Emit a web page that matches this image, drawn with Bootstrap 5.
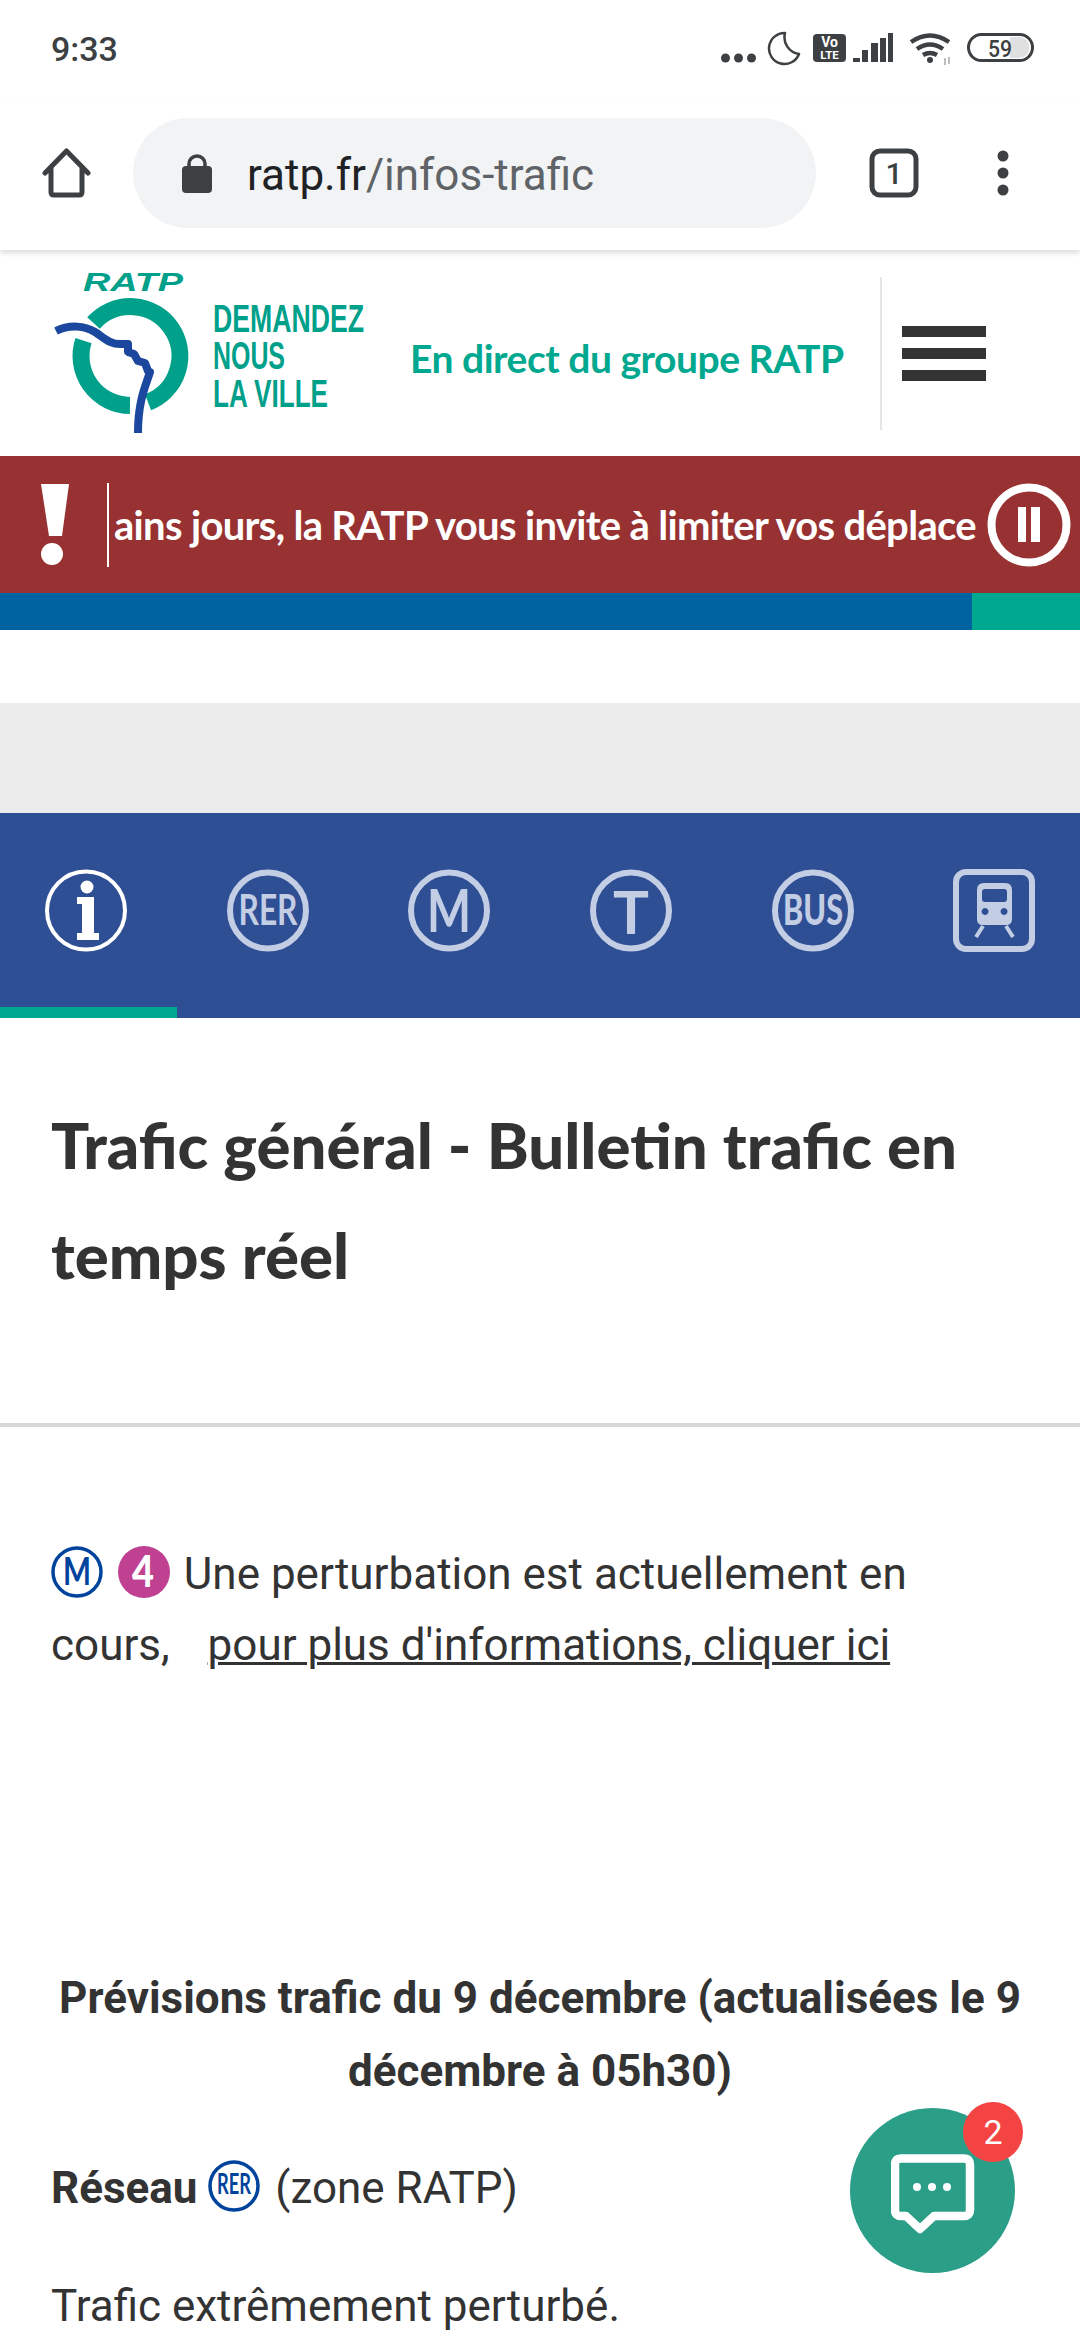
<!DOCTYPE html>
<html lang="fr">
<head>
<meta charset="UTF-8">
<meta name="viewport" content="width=device-width, initial-scale=1.0">
<title>Infos trafic - RATP</title>
<link href="https://cdn.jsdelivr.net/npm/bootstrap@5.3.0/dist/css/bootstrap.min.css" rel="stylesheet">
<style>
body { width: 1080px; height: 2340px; overflow: hidden; font-family: Roboto, sans-serif; color: #333; background: #fff; position: relative; }
.status-bar { height: 100px; padding: 0 44px 4px 51px; color: #3c4043; }
.status-time { font-size: 34px; font-weight: 500; margin-top: 3px; }
.chrome-bar { height: 150px; padding: 18px 0 22px 42px; box-shadow: 0 3px 5px rgba(0,0,0,.14); position: relative; z-index: 1; }
.url-pill { width: 683px; height: 110px; margin-left: 42px; background: #f1f3f4; border-radius: 55px; padding-left: 49px; font-size: 44px; color: #202124; }
.url-lock { margin-right: 35px; }
.url-text { margin-top: 3px; }
.url-path { color: #5f6368; }
.tab-count { margin-left: 53px; }
.more-dots { margin-left: 76px; }
.site-header { height: 206px; padding-left: 53px; }
.head-tagline { width: 433px; font-family: Lato, sans-serif; font-weight: 700; font-size: 39px; letter-spacing: -.48px; color: #00a88f; margin-left: 45px; margin-top: 10px; white-space: nowrap; }
.head-sep { width: 2px; height: 153px; background: #e6e6e6; margin-left: 37px; }
.burger { width: 84px; margin-left: 20px; }
.burger span { display: block; height: 11px; background: #333; margin-top: 11px; }
.burger span:first-child { margin-top: 0; }
.alert-band { height: 137px; background: #983232; color: #fff; }
.alert-mark { width: 109px; height: 84px; border-right: 2px solid #fff; padding-left: 40px; flex: none; }
.alert-text { width: 862px; margin-left: 5px; overflow: hidden; white-space: nowrap; font-family: Lato, sans-serif; font-weight: 700; font-size: 40px; letter-spacing: -.68px; }
.pause-wrap { margin-left: 11px; }
.stripe { height: 37px; background: #0063a1; }
.stripe-end { width: 108px; background: #00a88f; }
.grey-band { height: 110px; background: #ececec; margin-top: 73px; }
.line-tabs { height: 205px; background: #2f4f95; padding: 56px 0 0 45px; gap: 99.7px; position: relative; overflow: hidden; }
.line-tabs svg { flex: none; }
.tab-active { position: absolute; left: 0; bottom: 0; width: 177px; height: 11px; background: #00a88f; }
.page-title { font-family: Lato, sans-serif; font-weight: 900; font-size: 63.5px; line-height: 110px; margin: 0; padding: 72px 51px 113px; color: #333; }
.title-rule { height: 4px; background: #d8d8d8; }
.info-body { padding: 0 51px; font-size: 44px; line-height: 71px; }
.notice { margin: 112px 0 0; }
.notice svg, .rer-line svg { vertical-align: -9px; }
.line-four { margin-right: 3px; }
.notice a { color: #333; margin-left: 27px; text-decoration-thickness: 3px; }
.forecast { margin: 281px 0 0; text-align: center; font-weight: 700; line-height: 73px; }
.rer-line { margin: 45px 0 0; }
.rer-line b { font-weight: 700; }
.traffic-line { margin: 47px 0 0; }
.chat-btn { position: absolute; left: 850px; top: 2108px; width: 165px; height: 165px; border-radius: 50%; background: #2b9e87; }
.chat-btn > svg { margin: 7px 0 0 1px; }
.chat-count { position: absolute; left: 113px; top: -6px; width: 60px; height: 60px; border-radius: 50%; background: #f44343; color: #fff; font-size: 34px; }
</style>
</head>
<body>

<div class="status-bar d-flex align-items-center justify-content-between">
    <span class="status-time">9:33</span>
    <svg width="316" height="36" viewBox="720 30 316 36" fill="#3c4043">
        <circle cx="725.500" cy="58" r="4.500"/><circle cx="738.500" cy="58" r="4.500"/><circle cx="751.500" cy="58" r="4.500"/>
        <path d="M785 33A15.500 15.500 0 1 0 799 54 17 17 0 0 1 785 33z" fill="none" stroke="#3c4043" stroke-width="2.500" stroke-linejoin="round"/>
        <rect x="813" y="34" width="33" height="28" rx="4"/>
        <text x="829.500" y="47" font-family="Roboto" font-size="14" font-weight="700" fill="#fff" text-anchor="middle">Vo</text>
        <text x="829.500" y="59" font-family="Roboto" font-size="11.500" font-weight="700" fill="#fff" text-anchor="middle">LTE</text>
        <rect x="853" y="58" width="7" height="4"/><rect x="862" y="50" width="6" height="12"/><rect x="871" y="43" width="7" height="19"/><rect x="880" y="38" width="6" height="24"/><rect x="888" y="33" width="5" height="29"/>
        <path d="M911 42q19-13 38 0M917 49q13-9 26 0M923 55q7-4 14 0" fill="none" stroke="#3c4043" stroke-width="4.500"/>
        <circle cx="930" cy="60" r="3"/>
        <path d="M945 58v7M949 57v7" fill="none" stroke="#a8a8a8" stroke-width="1.500"/>
        <rect x="968.500" y="34.500" width="64" height="26" rx="13" fill="#fff" stroke="#3c4043" stroke-width="3"/>
        <path d="M1010 37h9a10.500 10.500 0 0 1 0 21h-9z" fill="#e0e0e0"/>
        <text x="988" y="57" font-family="Roboto" font-size="24" font-weight="500" textLength="24" lengthAdjust="spacingAndGlyphs">59</text>
    </svg>
</div>

<div class="chrome-bar d-flex align-items-center">
    <svg width="49" height="50" viewBox="0 0 49 50" fill="none" stroke="#3c4043" stroke-width="5" stroke-linejoin="round" stroke-linecap="round"><path d="M3 25 24.500 3 46 25M9 20v24q0 3 3 3h25q3 0 3-3V20"/></svg>
    <div class="url-pill d-flex align-items-center">
        <svg class="url-lock" width="30" height="39" viewBox="0 0 30 39" fill="#3c4043"><path d="M7 13V10a8 8 0 0 1 16 0v3" fill="none" stroke="#3c4043" stroke-width="3.500"/><rect x="0" y="12" width="30" height="27" rx="4"/></svg>
        <span class="url-text">ratp.fr<span class="url-path">/infos-trafic</span></span>
    </div>
    <svg class="tab-count" width="50" height="50" viewBox="0 0 50 50"><rect x="3" y="3" width="44" height="44" rx="8" fill="none" stroke="#3c4043" stroke-width="5"/><text x="25" y="36" font-family="Roboto" font-size="30" font-weight="500" fill="#3c4043" text-anchor="middle">1</text></svg>
    <svg class="more-dots" width="16" height="46" viewBox="0 0 16 46" fill="#3c4043"><circle cx="8" cy="6" r="5.500"/><circle cx="8" cy="23" r="5.500"/><circle cx="8" cy="40" r="5.500"/></svg>
</div>

<header class="site-header d-flex align-items-center">
    <svg width="312" height="166" viewBox="53 270 312 166" class="flex-shrink-0">
        <text x="83" y="291" font-family="Liberation Sans" font-size="25" font-weight="700" font-style="italic" fill="#00a08a" textLength="100" lengthAdjust="spacingAndGlyphs">RATP</text>
        <path d="M93.500 323A49.500 49.500 0 1 1 148 402.300M83.500 340.600A49.500 49.500 0 0 0 130 405.500" fill="none" stroke="#00a08a" stroke-width="17"/>
        <path d="M56 331C70 324 85 326 95 332 103 337 110 345 122 344L128 344 128 352 134 354 138 361 145 363 148 371 150 372C146 385 138 400 138 433" fill="none" stroke="#1b479f" stroke-width="8" stroke-linejoin="round"/>
        <text x="213" y="332" font-family="Liberation Sans" font-size="38" font-weight="700" fill="#00a08a" textLength="151" lengthAdjust="spacingAndGlyphs">DEMANDEZ</text>
        <text x="213" y="369" font-family="Liberation Sans" font-size="38" font-weight="700" fill="#00a08a" textLength="72" lengthAdjust="spacingAndGlyphs">NOUS</text>
        <text x="213" y="407" font-family="Liberation Sans" font-size="38" font-weight="700" fill="#00a08a" textLength="115" lengthAdjust="spacingAndGlyphs">LA VILLE</text>
    </svg>
    <span class="head-tagline">En direct du groupe RATP</span>
    <div class="head-sep"></div>
    <div class="burger"><span></span><span></span><span></span></div>
</header>

<div class="alert-band d-flex align-items-center">
    <div class="alert-mark">
        <svg width="30" height="84" viewBox="0 0 30 84" fill="#fff"><path d="M1 1h28l-7 52H9z"/><circle cx="12" cy="71" r="11"/></svg>
    </div>
    <div class="alert-text">ains jours, la RATP vous invite à limiter vos déplace</div>
    <svg class="pause-wrap" width="84" height="84" viewBox="0 0 84 84" fill="#fff"><circle cx="42" cy="42" r="37.500" fill="none" stroke="#fff" stroke-width="8"/><rect x="31" y="24" width="8" height="35"/><rect x="44" y="24" width="9" height="35"/></svg>
</div>
<div class="stripe d-flex justify-content-end"><div class="stripe-end"></div></div>

<div class="grey-band"></div>

<nav class="line-tabs d-flex">
    <svg width="82" height="83" viewBox="0 0 82 83" fill="#fff"><circle cx="41" cy="41.500" r="39" fill="none" stroke="#fff" stroke-width="4"/><circle cx="42" cy="18" r="6.500"/><path d="M32 28h17v36h5v7H32v-7h5V35h-5z"/></svg>
    <svg width="82" height="83" viewBox="0 0 82 83"><circle cx="41" cy="41.500" r="38" fill="none" stroke="#c3cde4" stroke-width="6"/><text x="41" y="56" font-family="Lato" font-size="42" font-weight="700" fill="#c3cde4" text-anchor="middle" textLength="59" lengthAdjust="spacingAndGlyphs">RER</text></svg>
    <svg width="82" height="83" viewBox="0 0 82 83"><circle cx="41" cy="41.500" r="38" fill="none" stroke="#c3cde4" stroke-width="6"/><text x="41" y="63" font-family="Lato" font-size="60" font-weight="700" fill="#c3cde4" text-anchor="middle" textLength="44" lengthAdjust="spacingAndGlyphs">M</text></svg>
    <svg width="82" height="83" viewBox="0 0 82 83"><circle cx="41" cy="41.500" r="38" fill="none" stroke="#c3cde4" stroke-width="6"/><text x="41" y="65" font-family="Lato" font-size="60" font-weight="700" fill="#c3cde4" text-anchor="middle" textLength="36" lengthAdjust="spacingAndGlyphs">T</text></svg>
    <svg width="82" height="83" viewBox="0 0 82 83"><circle cx="41" cy="41.500" r="38" fill="none" stroke="#c3cde4" stroke-width="6"/><text x="41" y="56" font-family="Lato" font-size="42" font-weight="900" fill="#c3cde4" text-anchor="middle" textLength="60" lengthAdjust="spacingAndGlyphs">BUS</text></svg>
    <svg width="82" height="83" viewBox="0 0 82 83" fill="#c3cde4"><rect x="3" y="3" width="76" height="77" rx="10" fill="none" stroke="#c3cde4" stroke-width="6"/><path d="M31 14h21q7 0 7 7v29q0 6-6 6H30q-6 0-6-6V21q0-7 7-7zm1 6q-3 0-3 3v7q0 3 3 3h19q3 0 3-3v-7q0-3-3-3zm0 19a3.500 3.500 0 1 0 .1 0zm19 0a3.500 3.500 0 1 0 .1 0z" fill-rule="evenodd"/><path d="M30 57l-7 11M53 57l7 11" fill="none" stroke="#c3cde4" stroke-width="4"/></svg>
    <div class="tab-active"></div>
</nav>

<h1 class="page-title">Trafic général - Bulletin trafic en temps réel</h1>
<div class="title-rule"></div>

<main class="info-body">
    <p class="notice">
        <svg width="52" height="52" viewBox="0 0 52 52"><circle cx="26" cy="26" r="24" fill="#fff" stroke="#00439c" stroke-width="3.500"/><text x="26" y="39" font-family="Lato" font-size="39" font-weight="700" fill="#00439c" text-anchor="middle" textLength="28" lengthAdjust="spacingAndGlyphs">M</text></svg>
        <svg class="ms-1 line-four" width="52" height="52" viewBox="0 0 52 52"><circle cx="26" cy="26" r="26" fill="#c04191"/><text x="25" y="41" font-family="Lato" font-size="44" font-weight="900" fill="#fff" text-anchor="middle" textLength="22" lengthAdjust="spacingAndGlyphs">4</text></svg>
        Une perturbation est actuellement en cours, <a href="#">pour plus d'informations, cliquer ici</a>
    </p>
    <p class="forecast">Prévisions trafic du 9 décembre (actualisées le 9 décembre à 05h30)</p>
    <p class="rer-line"><b>Réseau</b>
        <svg class="me-1" width="52" height="52" viewBox="0 0 52 52"><circle cx="26" cy="26" r="24" fill="#fff" stroke="#00439c" stroke-width="3.500"/><text x="26" y="34" font-family="Lato" font-size="28" font-weight="700" fill="#00439c" text-anchor="middle" textLength="34" lengthAdjust="spacingAndGlyphs">RER</text></svg>
        (zone RATP)</p>
    <p class="traffic-line">Trafic extrêmement perturbé.</p>
</main>

<div class="chat-btn d-flex align-items-center justify-content-center">
    <svg width="84" height="80" viewBox="892 2154 84 80"><path d="M902 2158.500H965q6 0 6 6V2210q0 6-6 6H935L921 2229 907 2216H902q-6 0-6-6V2164.500q0-6 6-6z" fill="none" stroke="#fff" stroke-width="8.500" stroke-linejoin="round"/><circle cx="918" cy="2187" r="4" fill="#fff"/><circle cx="933" cy="2187" r="4" fill="#fff"/><circle cx="948" cy="2187" r="4" fill="#fff"/></svg>
    <span class="chat-count d-flex align-items-center justify-content-center">2</span>
</div>

</body>
</html>
